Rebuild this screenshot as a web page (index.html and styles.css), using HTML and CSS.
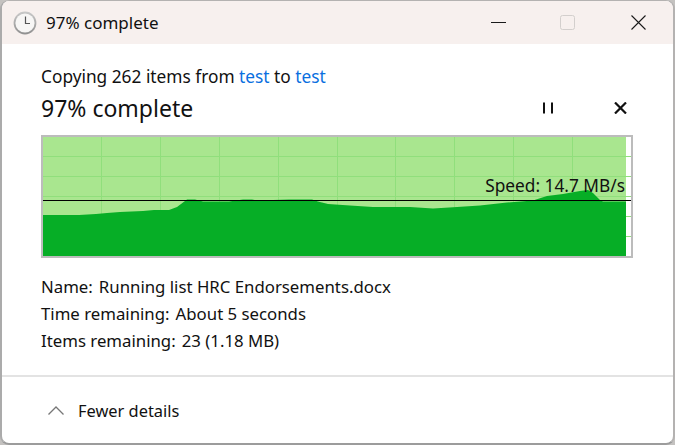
FILE: index.html
```html
<!DOCTYPE html>
<html>
  <head>
    <meta charset="utf-8" />
    <title>97% complete</title>
    <link rel="stylesheet" href="styles.css">
  </head>
  <body>
    <div class="window">
      <div class="titlebar">
        <svg class="clock" width="24" height="24" viewBox="0 0 24 24">
          <defs>
            <linearGradient id="rim" x1="0" y1="0" x2="0" y2="1">
              <stop offset="0" stop-color="#c9c9c9" />
              <stop offset="1" stop-color="#8f8f8f" />
            </linearGradient>
          </defs>
          <circle cx="12" cy="12" r="11.4" fill="url(#rim)" />
          <circle cx="12" cy="12" r="9.6" fill="#f7f6f5" />
          <path d="M12.5 5.5V12.5H17" fill="none" stroke="#555" stroke-width="1.2" />
        </svg>
        <span class="window-title">97% complete</span>
        <div class="controls">
          <svg width="15" height="15" viewBox="0 0 15 15"><path d="M0 7.5H15" stroke="#1a1a1a" stroke-width="1" /></svg>
          <svg class="maximize" width="15" height="15" viewBox="0 0 15 15"><rect x="0.5" y="0.5" width="14" height="14" rx="2" fill="none" stroke="#d3cfcd" /></svg>
          <svg width="15" height="15" viewBox="0 0 15 15"><path d="M0.5 0.5L14.5 14.5M14.5 0.5L0.5 14.5" stroke="#1a1a1a" stroke-width="1.1" /></svg>
        </div>
      </div>

      <div class="content">
        <div class="summary">Copying 262 items from <a>test</a> to <a>test</a></div>
        <div class="progress-row">
          <h1>97% complete</h1>
          <div class="actions">
            <svg width="12" height="12" viewBox="0 0 12 12"><path d="M2 0.5V11.5M10 0.5V11.5" stroke="#111" stroke-width="2" /></svg>
            <svg width="13" height="12" viewBox="0 0 13 12"><path d="M1 0.5L12 11.5M12 0.5L1 11.5" stroke="#111" stroke-width="2.2" /></svg>
          </div>
        </div>

        <div class="graph">
          <svg width="588" height="119" viewBox="43 137 588 119">
            <rect x="43" y="137" width="583" height="119" fill="#a9e68f" />
            <g stroke="#90df7c" stroke-width="1" shape-rendering="crispEdges">
              <path d="M101.5 137V256M160.5 137V256M219.5 137V256M278.5 137V256M337.5 137V256M395.5 137V256M454.5 137V256M513.5 137V256M572.5 137V256" />
              <path d="M43 156.5H631M43 176.5H631M43 196.5H631M43 216.5H631M43 236.5H631" />
            </g>
            <polygon fill="#06ae26" points="43,215 79,215 96,214 107,213 120,212 143,211 154,210 169,210 177,207 187,199.5 195,199.5 203,201.5 229,201.5 243,199.5 252,199.5 257,200.5 289,199.5 312,199.5 318,201.5 328,204 350,205.5 373,207 410,207 433,208.5 457,207 480,205.5 507,202.5 533,200.5 547,196 563,194 580,191 588,190 593,193 600,200 603,201.5 626,201.5 626,256 43,256" />
            <path d="M43 200.5H631" stroke="#000" stroke-width="1" shape-rendering="crispEdges" />
          </svg>
          <span class="speed">Speed: 14.7 MB/s</span>
        </div>

        <div class="details">
          <div class="row"><span>Name:</span><span>Running list HRC Endorsements.docx</span></div>
          <div class="row"><span>Time remaining:</span><span>About 5 seconds</span></div>
          <div class="row"><span>Items remaining:</span><span>23 (1.18 MB)</span></div>
        </div>
      </div>

      <div class="footer">
        <svg width="16" height="9" viewBox="0 0 16 9"><path d="M0.5 8.5L8 1L15.5 8.5" fill="none" stroke="#777" stroke-width="1.3" /></svg>
        <span>Fewer details</span>
      </div>
    </div>
  </body>
</html>
```

FILE: styles.css
```css
* {
  margin: 0;
  padding: 0;
  box-sizing: border-box;
}

body {
  width: 675px;
  height: 445px;
  overflow: hidden;
  background: #c4c2c0;
  font-family: "Noto Sans", sans-serif;
  font-size: 16.8px;
  color: #111;
}

.window {
  width: 675px;
  height: 445px;
  display: flex;
  flex-direction: column;
  background: #fff;
  border: 2px solid #b4b2b1;
  border-left-color: #ababab;
  border-bottom-color: #9c9c9c;
  border-top-width: 1px;
  border-radius: 9px;
  overflow: hidden;
}

.titlebar {
  height: 43px;
  flex-shrink: 0;
  display: flex;
  align-items: center;
  padding-left: 11px;
  background: #f7f0ee;
}

.clock {
  margin-right: 9px;
}

.window-title {
  font-size: 17px;
}

.controls {
  margin-left: auto;
  display: flex;
  align-items: center;
  gap: 54px;
  padding-right: 27px;
}

.maximize {
  margin-right: 2px;
}

.content {
  flex: 1;
  padding: 21px 39px 0;
}

.summary {
  height: 24px;
  line-height: 24px;
  font-size: 17.3px;
}

.summary a {
  color: #0a6fe0;
}

.progress-row {
  display: flex;
  align-items: center;
  height: 34px;
  margin-top: 2px;
}

h1 {
  font-size: 23px;
  font-weight: 400;
}

.actions {
  margin-left: auto;
  display: flex;
  gap: 60px;
  padding-right: 7px;
}

.graph {
  position: relative;
  width: 592px;
  height: 123px;
  margin-top: 10px;
  border: 2px solid #bcbcbc;
}

.graph svg {
  display: block;
}

.speed {
  position: absolute;
  top: 38px;
  right: 6px;
  font-size: 17.3px;
  line-height: 22px;
}

.details {
  margin-top: 15px;
}

.row {
  display: flex;
  gap: 6px;
  height: 27px;
  line-height: 27px;
}

.footer {
  margin-top: auto;
  height: 68px;
  flex-shrink: 0;
  display: flex;
  align-items: center;
  gap: 14px;
  padding-left: 46px;
  font-size: 16.4px;
  border-top: 2px solid #e3e3e3;
}
```
